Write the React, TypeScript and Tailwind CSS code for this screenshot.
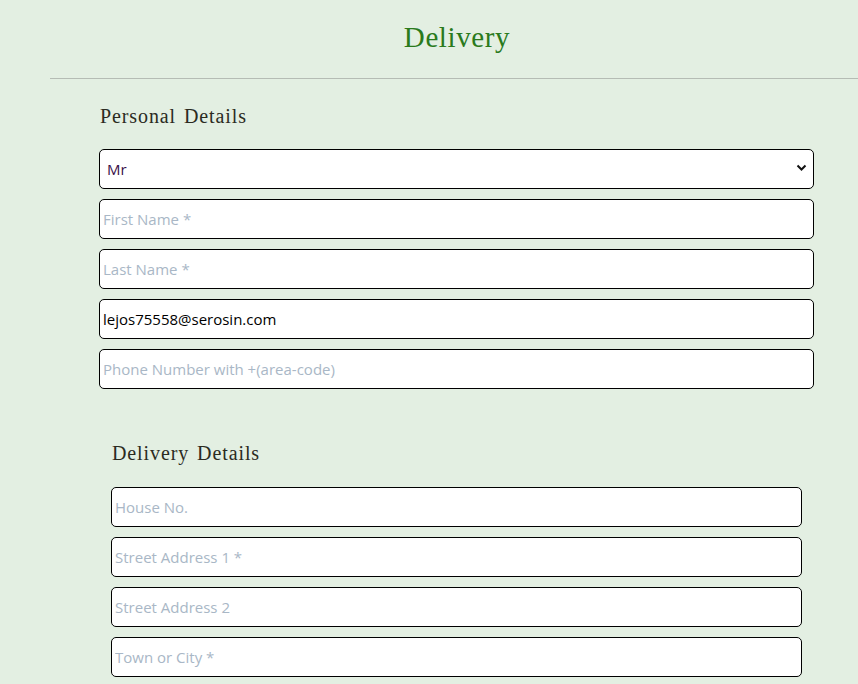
import React from "react";

const inputCls =
  "block w-full h-[40px] rounded-[5px] border border-black bg-white px-[3px] text-[15px] text-black placeholder:text-[#a9b7c6] outline-none";

const serif = { fontFamily: '"Liberation Serif", "DejaVu Serif", serif' };

export default function App() {
  return (
    <div
      className="w-[858px] h-[684px] overflow-hidden bg-[#e3efe2]"
      style={{ fontFamily: '"Open Sans", "Noto Sans", sans-serif' }}
    >
      <div className="ml-[50px] w-[814px]">
        <div className="h-[78px] flex items-center justify-center pb-[4px]">
          <h1 className="text-[29px] text-[#2a7a1c] leading-none tracking-[0.6px]" style={serif}>
            Delivery
          </h1>
        </div>
        <div className="h-px bg-[#b5bcb4]" />
      </div>

      <div className="ml-[99px] w-[715px]">
        <h2
          className="mt-[25px] mb-[21px] pl-[1px] text-[20px] leading-[24px] text-[#2b2b1f] tracking-[0.9px] [word-spacing:2px]"
          style={serif}
        >
          Personal Details
        </h2>
        <div className="flex flex-col gap-[10px]">
          <div className="relative">
            <select
              className="block w-full h-[40px] appearance-none rounded-[5px] border border-black bg-white pl-[7px] text-[15px] text-[#3a0f48] outline-none"
              defaultValue="Mr"
            >
              <option>Mr</option>
              <option>Mrs</option>
              <option>Ms</option>
            </select>
            <svg
              className="pointer-events-none absolute right-[7px] top-[15px]"
              width="11"
              height="8"
              viewBox="0 0 11 8"
            >
              <path d="M1.5 1.5 L5.5 5.5 L9.5 1.5" fill="none" stroke="#111" strokeWidth="2" />
            </svg>
          </div>
          <input className={inputCls} placeholder="First Name *" />
          <input className={inputCls} placeholder="Last Name *" />
          <input className={inputCls} defaultValue="lejos75558@serosin.com" />
          <input className={inputCls} placeholder="Phone Number with +(area-code)" />
        </div>

        <div className="px-[12px]">
          <h2
            className="mt-[52px] mb-[22px] pl-[1px] text-[20px] leading-[24px] text-[#2b2b1f] tracking-[0.9px] [word-spacing:2px]"
            style={serif}
          >
            Delivery Details
          </h2>
          <div className="flex flex-col gap-[10px]">
            <input className={inputCls} placeholder="House No." />
            <input className={inputCls} placeholder="Street Address 1 *" />
            <input className={inputCls} placeholder="Street Address 2" />
            <input className={inputCls} placeholder="Town or City *" />
          </div>
        </div>
      </div>
    </div>
  );
}
